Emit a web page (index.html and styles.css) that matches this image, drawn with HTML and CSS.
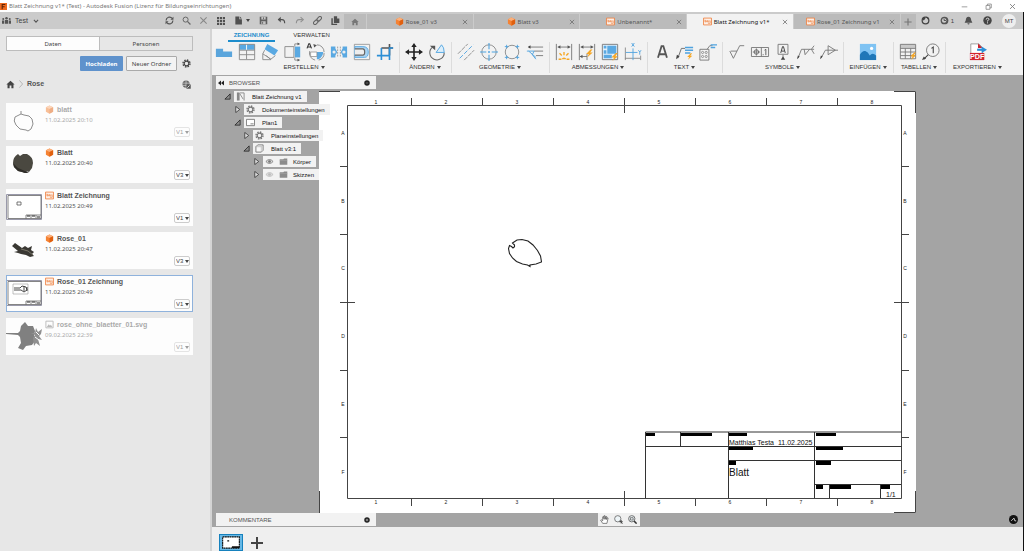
FILE: index.html
```html
<!DOCTYPE html>
<html lang="de">
<head>
<meta charset="utf-8">
<meta name="viewport" content="width=device-width, initial-scale=1">
<title>Blatt Zeichnung v1* (Test) - Autodesk Fusion</title>
<link rel="stylesheet" href="styles.css">
</head>
<body>
<svg class="defs" aria-hidden="true">
  <symbol id="cube" viewBox="0 0 10 10"><path d="M5 .5 9 2.4v5L5 9.6 1 7.4v-5z" fill="#f58233"/><path d="M5 .5 9 2.4 5 4.4 1 2.4z" fill="#fbb07c"/><path d="M5 4.4 9 2.4v5L5 9.6z" fill="#e0600f"/></symbol>
  <symbol id="dwg" viewBox="0 0 10 10"><path d="M.6 1.2h8.800v7.600H.6z" fill="#fdf0e7" stroke="#ee7d3a" stroke-width=".9"/><path d="M2.200 3v2.400h1.600V4.200H2.200M5 3.500v2h1.600v-2M5.500 7H8V4" fill="none" stroke="#ee7d3a" stroke-width=".7"/></symbol>
  <symbol id="pic" viewBox="0 0 10 10"><path d="M1 1.3h8v7.4H1z" fill="none" stroke="#777"/><path d="M2 7.8 4.2 4.6l1.3 1.7 1-.9L8.2 7.8z" fill="#777"/></symbol>
  <symbol id="x" viewBox="0 0 10 10"><path d="m1.5 1.5 7 7m0-7-7 7" fill="none" stroke="currentColor" stroke-width="1.2"/></symbol>
  <symbol id="home" viewBox="0 0 10 10"><path d="M5 .8 9.6 5H8.3v4.2H6V6.2H4v3H1.700V5H.4z" fill="currentColor"/></symbol>
  <symbol id="gear" viewBox="0 0 10 10"><circle cx="5" cy="5" r="3.9" fill="none" stroke="currentColor" stroke-width="1.5" stroke-dasharray="1.7 1.363"/><circle cx="5" cy="5" r="2.6" fill="none" stroke="currentColor" stroke-width="1.3"/></symbol>
  <symbol id="open" viewBox="0 0 8 8"><path d="M7 1v6H1z" fill="#8b8b8b" stroke="#222" stroke-width=".9"/></symbol>
  <symbol id="closed" viewBox="0 0 8 8"><path d="M2 .5 6.500 4 2 7.500z" fill="#ddd" stroke="#333" stroke-width=".9"/></symbol>
  <symbol id="eye" viewBox="0 0 10 10"><path d="M1 5q4-4.400 8 0-4 4.400-8 0z" fill="#ddd" stroke="currentColor" stroke-width=".9"/><circle cx="5" cy="5" r="1.500" fill="currentColor"/></symbol>
  <symbol id="folder" viewBox="0 0 10 10"><path d="M.8 2.600h4l.8-1h3.600v7H.8z" fill="#8c8c8c"/><path d="M.8 4h8.400" stroke="#aaa" stroke-width=".6"/></symbol>
  <symbol id="bolt" viewBox="0 0 8 8"><path d="M5 0 .5 4.600h2.600L1.500 8 7 3.200H4.400L6.800 0z" fill="#f6a623"/></symbol>
  <symbol id="sheet" viewBox="0 0 36 26"><path d="M.5.500h35v25H.5z" fill="#fff" stroke="#99a"/><path d="M2 1.500h33v23H2z" fill="#fff" stroke="#666" stroke-width=".8"/><path d="M20 24.500v-3.500h15M25 21v3m5-3v3" fill="none" stroke="#555" stroke-width=".7"/><path d="M21 22h3m2 0h3m2 1h3" stroke="#222"/></symbol>
</svg>

<header class="titlebar">
  <svg class="i7" viewBox="0 0 8 8"><path d="M0 0h8v8H0z" fill="#ee6a1f"/><path d="M2.500 7V1.800h3.500M2.500 4.300h2.800" fill="none" stroke="#5b2205" stroke-width="1.200"/></svg>
  <span class="titlebar-text">Blatt Zeichnung v1* (Test) - Autodesk Fusion (Lizenz für Bildungseinrichtungen)</span>
  <div class="window-controls">
    <button aria-label="Minimieren"><svg class="i7" viewBox="0 0 10 10"><path d="M1 5.500h8" stroke="#777"/></svg></button>
    <button aria-label="Wiederherstellen"><svg class="i7" viewBox="0 0 10 10"><path d="M1.500 3.500h5.500v5.500H1.500zM3.500 3.500v-2H9v5.500H7" fill="none" stroke="#777"/></svg></button>
    <button aria-label="Schließen"><svg class="i7"><use href="#x"/></svg></button>
  </div>
</header>

<div class="shell">
  <div class="topbar">
    <div class="team">
      <svg class="i9" viewBox="0 0 10 10"><path d="M0 5h2.500v3.500H0zM3.300 4.500h3.400v4H3.300zM7.500 5H10v3.500H7.500z" fill="#555"/><circle cx="1.400" cy="3.300" r="1.100" fill="#555"/><circle cx="5" cy="2.500" r="1.400" fill="#555"/><circle cx="8.600" cy="3.300" r="1.100" fill="#555"/></svg>
      <button class="team-name">Test <svg class="i6" viewBox="0 0 10 10"><path d="m1.500 3 3.500 4 3.500-4" fill="none" stroke="#555" stroke-width="1.700"/></svg></button>
      <div class="team-tools">
        <button aria-label="Aktualisieren"><svg class="i9" viewBox="0 0 10 10"><path d="M1.200 5A3.800 3.800 0 0 1 8 2.700M8.800 5A3.800 3.800 0 0 1 2 7.300" fill="none" stroke="#555" stroke-width="1.300"/><path d="M9.400.8v3.400H6zM.6 9.200V5.800H4z" fill="#555"/></svg></button>
        <button aria-label="Suchen"><svg class="i9" viewBox="0 0 10 10"><circle cx="4" cy="4" r="2.800" fill="none" stroke="#666" stroke-width="1.100"/><path d="m6 6 3.400 3.400" stroke="#666" stroke-width="1.400"/></svg></button>
        <button class="panel-close" aria-label="Panel schließen"><svg class="i9"><use href="#x"/></svg></button>
      </div>
    </div>
    <div class="quick">
      <button aria-label="Datengruppe"><svg class="i8" viewBox="0 0 9 9"><path d="M0 0h2.400v2.400H0zM3.300 0h2.400v2.400H3.300zM6.600 0H9v2.400H6.600zM0 3.300h2.400v2.400H0zM3.300 3.300h2.400v2.400H3.300zM6.600 3.300H9v2.400H6.600zM0 6.600h2.400V9H0zM3.300 6.600h2.400V9H3.300zM6.600 6.600H9V9H6.600z" fill="#505050"/></svg></button>
      <button class="quick-file" aria-label="Datei"><svg class="i9" viewBox="0 0 10 10"><path d="M1.500.5h4.300v3h3v6H1.500zM6.500.5l2.300 2.300H6.500z" fill="#505050"/></svg><span class="caret"></span></button>
      <button aria-label="Speichern"><svg class="i9" viewBox="0 0 10 10"><path d="M.8.800h8.400v8.400H.800z" fill="#606060"/><path d="M2.600 1.200h4.800v2.600H2.600zM2.600 5.800h4.800v3H2.600z" fill="#c4c4c4"/><path d="M5 1.500v2M4 6.500v2.200" stroke="#555" stroke-width=".9"/></svg></button>
      <button aria-label="Rückgängig"><svg class="i9" viewBox="0 0 10 10"><path d="M1.500 4h4q3 0 3 4" fill="none" stroke="#505050" stroke-width="1.300"/><path d="M4.200.8v6.400L.8 4z" fill="#505050"/></svg></button>
      <button aria-label="Wiederherstellen"><svg class="i9" viewBox="0 0 10 10"><path d="M8.500 4h-4q-3 0-3 4" fill="none" stroke="#909090" stroke-width="1.200"/><path d="m6.200 1.200 3 2.800-3 2.800" fill="none" stroke="#909090" stroke-width="1.200"/></svg></button>
      <button aria-label="Verknüpfung"><svg class="i9" viewBox="0 0 10 10"><g fill="none" stroke="#666" stroke-width="1.200" transform="rotate(-45 5 5)"><rect x="-.6" y="3.300" width="6" height="3.400" rx="1.700"/><rect x="4.600" y="3.300" width="6" height="3.400" rx="1.700"/></g></svg></button>
      <button aria-label="Kopien"><svg class="i9" viewBox="0 0 10 10"><path d="M3.200.300h3.600v2.400h2.500v5H3.200z" fill="#505050"/><path d="M1.200 2.500v6.800h5.600" fill="none" stroke="#505050" stroke-width="1.600"/></svg></button>
    </div>
    <nav class="tabs" aria-label="Dokumente">
      <button class="tab-home" aria-label="Start"><svg class="i8"><use href="#home"/></svg></button>
      <div class="tab"><a href="#t1"><svg class="i9"><use href="#cube"/></svg>Rose_01 v3</a><button aria-label="Schließen"><svg class="i6"><use href="#x"/></svg></button></div>
      <div class="tab"><a href="#t2"><svg class="i9"><use href="#cube"/></svg>Blatt v3</a><button aria-label="Schließen"><svg class="i6"><use href="#x"/></svg></button></div>
      <div class="tab"><a href="#t3"><svg class="i9"><use href="#dwg"/></svg>Unbenannt*</a><button aria-label="Schließen"><svg class="i6"><use href="#x"/></svg></button></div>
      <div class="tab tab-active"><a href="#t4"><svg class="i9"><use href="#dwg"/></svg>Blatt Zeichnung v1*</a><button aria-label="Schließen"><svg class="i6"><use href="#x"/></svg></button></div>
      <div class="tab"><a href="#t5"><svg class="i9"><use href="#dwg"/></svg>Rose_01 Zeichnung v1</a><button aria-label="Schließen"><svg class="i6"><use href="#x"/></svg></button></div>
      <button class="tab-add" aria-label="Neues Dokument"><svg class="i8" viewBox="0 0 10 10"><path d="M5 .5v9M.5 5h9" stroke="#777" stroke-width="1.500"/></svg></button>
    </nav>
    <div class="account">
      <button aria-label="Erweiterungen"><svg class="i9" viewBox="0 0 10 10"><circle cx="5" cy="5" r="3.700" fill="none" stroke="#444" stroke-width="1.400"/><path d="M1 3.200 3.500.800l1.500 2L3 5zM6 .5l3 2-1.500 1.500z" fill="#444"/></svg></button>
      <button aria-label="Auftragsstatus"><svg class="i9" viewBox="0 0 10 10"><circle cx="5" cy="5" r="4.300" fill="#555"/><circle cx="4.600" cy="5" r="2.500" fill="#ccc"/><path d="M4.600 3.300V5h2" fill="none" stroke="#444"/></svg><span>1</span></button>
      <button aria-label="Benachrichtigungen"><svg class="i9" viewBox="0 0 10 10"><path d="M5 .8q3 .4 3 4l1.300 2.700H.7L2 4.800q0-3.600 3-4zM3.800 8h2.400q-.2 1.400-1.200 1.400T3.800 8z" fill="#505050"/></svg></button>
      <button aria-label="Hilfe"><svg class="i9" viewBox="0 0 10 10"><circle cx="5" cy="5" r="4.700" fill="#444"/><path d="M3.500 4q0-1.600 1.600-1.600t1.500 1.400Q6.500 4.700 5 5.200v.9M5 7v1.200" fill="none" stroke="#ddd" stroke-width="1.100"/></svg></button>
      <button class="avatar">MT</button>
    </div>
  </div>

  <div class="body">
    <aside class="data">
      <div class="segment"><button class="segment-on">Daten</button><button>Personen</button></div>
      <div class="actions"><button class="primary">Hochladen</button><button class="secondary">Neuer Ordner</button><button class="bare" aria-label="Einstellungen"><svg class="i9"><use href="#gear"/></svg></button></div>
      <nav class="crumbs">
        <a href="#home" aria-label="Start"><svg class="i9"><use href="#home"/></svg></a>
        <svg class="i8" viewBox="0 0 10 10"><path d="m3 .5 4 4.500-4 4.500" fill="none" stroke="#aaa"/></svg>
        <a class="crumb" href="#rose">Rose</a>
        <button class="bare" aria-label="Im Web öffnen"><svg class="i9" viewBox="0 0 10 10"><circle cx="4.500" cy="4.500" r="4" fill="#666"/><path d="M.5 3.500h8M.5 6h8M4.500.5v8" stroke="#ddd" stroke-width=".7"/><path d="M5 5h4.700v4.700H5z" fill="#555"/><path d="m6 8.500 2.500-2.500" stroke="#eee"/></svg></button>
      </nav>
      <ul class="files">
        <li class="file file-dim">
          <svg class="thumb" viewBox="0 0 36 36"><path d="M15 11 13 12 9 14Q7 18 10 22L14 26 20 27 22 28 25 26 27 21Q27 15 23 13L18 12 15 11V8" fill="none" stroke="#222"/></svg>
          <div class="info"><h3><svg class="i9"><use href="#cube"/></svg>blatt</h3><time>11.02.2025 20:10</time></div>
          <label class="version"><select aria-label="Version blatt"><option>V1</option></select></label>
        </li>
        <li class="file">
          <svg class="thumb" viewBox="0 0 36 36"><path d="M7 17q0-6 5-9l2 2 3-2h4q6 3 6 9l-1 5-3 4-2-1-2 2-3-1-4-1-4-4z" fill="#4a4840"/><path d="m7 17 5 5 7 3 4 1-2 1-2 0-3-1-4-1-4-4z" fill="#2f2d28"/></svg>
          <div class="info"><h3><svg class="i9"><use href="#cube"/></svg>Blatt</h3><time>11.02.2025 20:40</time></div>
          <label class="version"><select aria-label="Version Blatt"><option>V3</option></select></label>
        </li>
        <li class="file">
          <svg class="thumb" viewBox="0 0 36 36"><use href="#sheet" y="5" width="36" height="26"/><path d="M11 13h4v3h-4z" fill="#fff" stroke="#555" stroke-width=".8"/></svg>
          <div class="info"><h3><svg class="i9"><use href="#dwg"/></svg>Blatt Zeichnung</h3><time>11.02.2025 20:49</time></div>
          <label class="version"><select aria-label="Version Blatt Zeichnung"><option>V1</option></select></label>
        </li>
        <li class="file">
          <svg class="thumb" viewBox="0 0 36 36"><path d="m9 11 7 5 3-2 3 2 4-2-1 4 3 2-2 2 2 2-4 1-4-2-5-1-3-1-4-1 4-1-6-5z" fill="#3a3833"/><path d="m15 17 7 2 5 4" stroke="#777466" fill="none"/></svg>
          <div class="info"><h3><svg class="i9"><use href="#cube"/></svg>Rose_01</h3><time>11.02.2025 20:47</time></div>
          <label class="version"><select aria-label="Version Rose_01"><option>V3</option></select></label>
        </li>
        <li class="file file-on">
          <svg class="thumb" viewBox="0 0 36 36"><use href="#sheet" y="5" width="36" height="26"/><path d="M7 9h15v10H7z" fill="none" stroke="#999" stroke-width=".6"/><path d="M8 13h6l2-2 4 1 1 3-3 2-3-2H8M18 11v5m3-4v4" fill="none" stroke="#333" stroke-width=".9"/></svg>
          <div class="info"><h3><svg class="i9"><use href="#dwg"/></svg>Rose_01 Zeichnung</h3><time>11.02.2025 20:49</time></div>
          <label class="version"><select aria-label="Version Rose_01 Zeichnung"><option>V1</option></select></label>
        </li>
        <li class="file file-faded">
          <svg class="thumb" viewBox="0 0 36 36"><path d="M0 15h12l2-2 1-5 4-4 3 4h5l2 5-1 5 1 5-3 4-6 1-3 4-5-2 3-5-1-6-2-2-12-1z" fill="#808080"/><path d="m29 15 1-5 2 4 4-3-1 5-2 2 3 4-4-1 2 7-4-3-2 3-1-8 2-3-4-2z" fill="#909090"/><path d="m30 14 3 3m-4 2 4 3" stroke="#fff"/></svg>
          <div class="info"><h3><svg class="i9"><use href="#pic"/></svg>rose_ohne_blaetter_01.svg</h3><time>09.02.2025 22:39</time></div>
          <label class="version"><select aria-label="Version rose_ohne_blaetter_01.svg"><option>V1</option></select></label>
        </li>
      </ul>
    </aside>

    <main class="work">
      <div class="ribbon">
        <nav class="ribbon-tabs"><button class="ribbon-on">ZEICHNUNG</button><button>VERWALTEN</button></nav>
        <div class="groups">
          <section class="group group-first">
            <div class="tools">
              <button aria-label="Basisansicht"><svg viewBox="0 0 20 20"><path d="M1 6.500h8v3h10v6H1z" fill="#5aa5dc"/></svg></button>
              <button aria-label="Parallelansicht"><svg viewBox="0 0 20 20"><path d="M1.500 1.500h17v6h-17z" fill="#5aa9e2"/><path d="M1.500 1.500h17v17h-17zM1.500 8h17M1.500 13h17M9.500 8v10" fill="none" stroke="#888"/><path d="M9.500 2v5.500" stroke="#fff"/></svg></button>
              <button aria-label="Schnittansicht"><svg viewBox="0 0 20 20"><path d="m7 1 12 7-4 6L4 7z" fill="#5aa9e2"/><path d="m4 8-2 4 9 6 5-4M2 12v6.500h9L6 14" fill="none" stroke="#888"/></svg></button>
              <button aria-label="Detailansicht"><svg viewBox="0 0 20 20"><path d="M12 4h6v12h-6z" fill="#5aa9e2"/><path d="M1 4h10v12H1zM12 4V1h4M12 16v3h4" fill="none" stroke="#888"/><path d="m15-.5 3 1.500-3 1.500zM15 17.500l3 1.500-3 1.500z" fill="#555"/></svg></button>
              <button aria-label="Hilfsansicht"><svg viewBox="0 0 20 20"><path d="m0 6 2-5h1l2 5M1 4.500h3" fill="none" stroke="#333" stroke-width="1.200"/><path d="M11 2a8 8 0 0 1 8 8M3 9a8 8 0 0 0 6 10M19 11a8 8 0 0 1-6 8" fill="none" stroke="#888"/><path d="M11 10h7q0 5-5 8h-2z" fill="#5aa9e2"/><path d="M4 10h7v5H4z" fill="#fff" stroke="#888" stroke-width=".8"/><path d="m7 1 4 1.500L8 5z" fill="#555"/></svg></button>
              <button aria-label="Unterbrochene Ansicht"><svg viewBox="0 0 20 20"><path d="M1 4h5v2l2 4-2 4v2H1zM19 4h-5v2l-2 4 2 4v2h5z" fill="#5aa9e2"/><path d="M8.500 4v12M11.500 4v12" stroke="#999" stroke-dasharray="2 1"/><circle cx="4.500" cy="10" r="1.800" fill="#eee"/><circle cx="15.500" cy="10" r="1.800" fill="#eee"/></svg></button>
              <button aria-label="Ausschnitt"><svg viewBox="0 0 20 20"><path d="M1.500 1.500h17v17h-17z" fill="none" stroke="#999"/><path d="M2 4h9q6 0 6 6t-4 6H2z" fill="#a9d3f2" stroke="#5aa9e2"/><path d="M2 6.500h9q2 0 2 3.500t-2 3.500H2" fill="#eee" stroke="#666" stroke-width="1.300"/></svg></button>
              <button aria-label="Zuschneiden"><svg viewBox="0 0 20 20"><path d="M6 5.500h13M15 1v13" stroke="#555" stroke-width="1.800"/><path d="M1 14h14v5M6 19V5.500M19 5.500h-4V14" fill="none" stroke="#2c8fd6" stroke-width="1.800"/></svg></button>
            </div>
            <button class="group-name">ERSTELLEN<span class="caret"></span></button>
          </section>
          <section class="group">
            <div class="tools">
              <button aria-label="Verschieben"><svg viewBox="0 0 20 20"><path d="M10 4v12M4 10h12" stroke="#222" stroke-width="1.800"/><path d="m10 0 3 4.500H7zM10 20l3-4.500H7zM0 10l4.500-3v6zM20 10l-4.500-3v6z" fill="#222"/></svg></button>
              <button aria-label="Drehen"><svg viewBox="0 0 20 20"><path d="M5 4.500a8 8 0 1 0 13 6" fill="none" stroke="#666" stroke-width="1.200"/><path d="M2 3h6v5z" fill="#555"/><path d="M9 10.500h9q0-6-3-8.500z" fill="#dceefa" stroke="#4fa3df"/></svg></button>
            </div>
            <button class="group-name">ÄNDERN<span class="caret"></span></button>
          </section>
          <section class="group">
            <div class="tools">
              <button aria-label="Mittellinie"><svg viewBox="0 0 20 20"><path d="M1 12 12 1M8 19 19 8" stroke="#888" stroke-dasharray="5 1"/><path d="m3 17 15-15" stroke="#4fa3df" stroke-dasharray="5 2"/></svg></button>
              <button aria-label="Mittelpunktmarkierung"><svg viewBox="0 0 20 20"><circle cx="10" cy="10" r="8" fill="none" stroke="#888"/><path d="M10 0v7m0 2v2m0 2v7M0 10h7m2 0h2m2 0h7" stroke="#4fa3df" stroke-width="1.200"/></svg></button>
              <button aria-label="Mittelpunktmuster"><svg viewBox="0 0 20 20"><circle cx="10" cy="10" r="7.500" fill="none" stroke="#888"/><path d="M4 2v4m-2-2h4M16 2v4m-2-2h4M4 14v4m-2-2h4M16 14v4m-2-2h4" stroke="#4fa3df"/></svg></button>
              <button aria-label="Kantenverlängerung"><svg viewBox="0 0 20 20"><path d="M3 4.500h16M9 9h10M11 14h8" stroke="#777"/><path d="M5 2.500 2 4.500l3 2z" fill="#444"/><path d="m1 9 8 0-2 4 4 5M3 9l8 7" fill="none" stroke="#4fa3df"/></svg></button>
            </div>
            <button class="group-name">GEOMETRIE<span class="caret"></span></button>
          </section>
          <section class="group">
            <div class="tools">
              <button aria-label="Bemaßung"><svg viewBox="0 0 20 20"><path d="M1.500 1v18M18.500 1v18M3 4.500h14" stroke="#777"/><path d="m6 2.500-3 2 3 2zM14 2.500l3 2-3 2z" fill="#555"/><path d="M10 10v3.500M5 11.500l2.500 2.500M15 11.500 12.500 14M4 18h3M13 18h3" fill="none" stroke="#f6a623" stroke-width="1.500"/><path d="M7 18q3-4 6 0" fill="#f6a623"/></svg></button>
              <button aria-label="Kettenbemaßung"><svg viewBox="0 0 20 20"><path d="M1.500 1v18M18.500 1v18M3 4.500h14M2 15h8M10 12v7" stroke="#777"/><path d="m6 2.500-3 2 3 2zM14 2.500l3 2-3 2zM5 13l-3 2 3 2z" fill="#555"/><use href="#bolt" x="8" y="7" width="10" height="9"/></svg></button>
              <button aria-label="Automatische Bemaßung"><svg viewBox="0 0 20 20"><path d="M1.500 1.500h17v17h-17z" fill="#e4f1fb" stroke="#777"/><path d="M3 3h3v3H3zM7 3h10v9H7zM3 8h3v4H3zM3 13h9v4H3z" fill="#5aa9e2"/><use href="#bolt" x="11" y="11" width="9" height="9"/></svg></button>
              <button aria-label="Koordinatenbemaßung"><svg viewBox="0 0 20 20"><path d="M1.500 5v14M1 17h17M18.500 14v5" stroke="#888"/><path d="M10 6v13M2 10.500h13M8.500 0l3 4m0-4-3 4M16 8l1.500 2L19 8m-1.500 2v3" fill="none" stroke="#4fa3df"/></svg></button>
            </div>
            <button class="group-name">ABMESSUNGEN<span class="caret"></span></button>
          </section>
          <section class="group">
            <div class="tools">
              <button aria-label="Text"><svg viewBox="0 0 20 20"><path d="m5.500 16.500 4-13h2l4 13M7 12.500h7" fill="none" stroke="#555" stroke-width="2"/></svg></button>
              <button aria-label="Führungslinie"><svg viewBox="0 0 20 20"><path d="M2 17 6 6h4" fill="none" stroke="#666"/><path d="m0 18 1-5 3 2z" fill="#444"/><path d="M10 5h9M10 8h9M10 11h6" stroke="#4fa3df" stroke-width="1.700"/><use href="#bolt" x="12" y="11" width="7" height="8"/></svg></button>
              <button aria-label="Bohrungsinfo"><svg viewBox="0 0 20 20"><path d="M1 7h10v12H1zM9 7l3-4h3" fill="none" stroke="#777"/><g fill="none" stroke="#777" stroke-width=".8"><circle cx="4" cy="10.500" r="1.200"/><circle cx="8" cy="10.500" r="1.200"/><circle cx="4" cy="15" r="1.200"/><circle cx="8" cy="15" r="1.200"/></g><path d="M13 2h7M13 5h5" stroke="#4fa3df" stroke-width="1.400"/></svg></button>
            </div>
            <button class="group-name">TEXT<span class="caret"></span></button>
          </section>
          <section class="group">
            <div class="tools">
              <button aria-label="Oberfläche"><svg viewBox="0 0 20 20"><path d="m2 9 4 8 7-14h5M3 9h7" fill="none" stroke="#777"/></svg></button>
              <button aria-label="Geometrische Toleranz"><svg viewBox="0 0 20 20"><path d="M.5 5h19v10H.5zM11.500 5v10M2 10h8M6 6v8" fill="none" stroke="#777"/><circle cx="6" cy="10" r="2.500" fill="none" stroke="#666"/><path d="M13 13h1M15 8l1.500-1v6.500" fill="none" stroke="#555"/></svg></button>
              <button aria-label="Bezug"><svg viewBox="0 0 20 20"><path d="M4.500 1.500h11v11h-11zM10 13v5" fill="none" stroke="#777"/><path d="m7.500 11 2-7h1l2 7M8.500 9h3" fill="none" stroke="#444" stroke-width="1.100"/><path d="M7.500 18.500h5L10 15z" fill="#444"/></svg></button>
              <button aria-label="Schweißen"><svg viewBox="0 0 20 20"><path d="m1 17 4-10h14M19 3l-3 4 3 5M8 7l1 6 5-6" fill="none" stroke="#777"/><path d="m0 18 1-4 2 1z" fill="#444"/></svg></button>
              <button aria-label="Kegel"><svg viewBox="0 0 20 20"><path d="m1 17 5-9h3m0-5v10l8-5zM9 8h11" fill="none" stroke="#777"/><path d="m0 18 1-4 2 1z" fill="#444"/></svg></button>
            </div>
            <button class="group-name">SYMBOLE<span class="caret"></span></button>
          </section>
          <section class="group group-wide">
            <div class="tools">
              <button aria-label="Bild einfügen"><svg viewBox="0 0 20 20"><path d="M1 1h18v18H1z" fill="#7fc3f3"/><path d="M1 13q3-5 6-4t5 5q3-4 7 0v5H1z" fill="#1f77b8"/><circle cx="14" cy="6" r="1.800" fill="#fff"/></svg></button>
            </div>
            <button class="group-name">EINFÜGEN<span class="caret"></span></button>
          </section>
          <section class="group">
            <div class="tools">
              <button aria-label="Tabelle"><svg viewBox="0 0 20 20"><path d="M1.500 1.500h17v4h-17z" fill="#c9c9c9"/><path d="M1.500 1.500h17v16h-17zM1.500 6h17M1.500 10h17M1.500 14h17M7 6v11.500M13 6v11.500" fill="none" stroke="#777"/><use href="#bolt" x="12" y="10" width="8" height="9"/></svg></button>
              <button aria-label="Positionsnummer"><svg viewBox="0 0 20 20"><circle cx="12" cy="8" r="7" fill="none" stroke="#777"/><path d="m7 13-5 5M10.500 6l2-1.500v7" fill="none" stroke="#444" stroke-width="1.200"/><path d="m0 19 2-4 2.500 2.500z" fill="#444"/></svg></button>
            </div>
            <button class="group-name">TABELLEN<span class="caret"></span></button>
          </section>
          <section class="group group-last">
            <div class="tools">
              <button aria-label="PDF exportieren"><svg viewBox="0 0 20 20"><path d="M2 1h9l4 4v7H2z" fill="#fff" stroke="#999"/><path d="m10 .5 5 5h-5z" fill="#c8202c"/><path d="M1 11h16v8H1z" fill="#d2232f"/><text class="pdf" x="9" y="18">PDF</text><path d="M9 7.500h6" stroke="#2b8fd8" stroke-width="2.400"/><path d="m14 4 6 3.500L14 11z" fill="#2b8fd8"/></svg></button>
            </div>
            <button class="group-name">EXPORTIEREN<span class="caret"></span></button>
          </section>
        </div>
      </div>

      <div class="canvas">
        <svg class="drawing" viewBox="319 91 597 422" role="img" aria-label="Zeichnungsblatt">
          <path d="M319 91h597v422H319z" fill="#fff"/>
          <g fill="none" stroke="#444">
            <path d="M319 91.500h21M894 91.500h21.500V113M915.500 491v21.500H894M319.500 491v22"/>
            <path d="M347.500 105.500h554v393h-554z"/>
            <path d="M411.500 98v7M482.500 98v7M553.500 98v7M624.500 98v15M695.500 98v7M766.500 98v7M837.500 98v7M411.500 499v7M482.500 499v7M553.500 499v7M624.500 491v15M695.500 499v7M766.500 499v7M837.500 499v7"/>
            <path d="M340 166.500h7M340 234.500h7M340 302.500h15M340 370.500h7M340 437.500h7M902 166.500h7M902 234.500h7M894 302.500h15M902 370.500h7M902 437.500h7"/>
            <path d="M645.500 498v-66h256M645.500 446.500h256M680.500 432v14M728.500 432v66M814.500 432v66M728 460.500h173M815 484.500h86M829.500 485v13M880.500 485v13" stroke="#333"/>
          </g>
          <path d="M646 433h9v3h-9zM681 433h31v3h-31zM729 433h18v3h-18zM816 433h20v3h-20zM729 447h24v3h-24zM816 447h27v3h-27zM729 461h7v4h-7zM816 461h15v4h-15zM816 485h7v4h-7zM830 485h21v4h-21zM881 485h9v4h-9z" fill="#000"/>
          <path d="M512.500 243 517 240 522 239.500 528 241 533 245 537.500 250.500 540.500 256 541.500 262 536 264 530 265V266.500L527.500 265 522.500 264 516.500 261.500 512.500 258 509.500 253.500 508.500 248.500 509.500 245.500 511.500 246.500 513 248 514.500 246.800V245z" fill="none" stroke="#222" stroke-width="1.100"/>
          <g class="zones">
            <text x="376" y="104">1</text><text x="446" y="104">2</text><text x="517" y="104">3</text><text x="588" y="104">4</text><text x="659" y="104">5</text><text x="730" y="104">6</text><text x="801" y="104">7</text><text x="872" y="104">8</text>
            <text x="376" y="504">1</text><text x="446" y="504">2</text><text x="517" y="504">3</text><text x="588" y="504">4</text><text x="659" y="504">5</text><text x="730" y="504">6</text><text x="801" y="504">7</text><text x="872" y="504">8</text>
            <text x="343" y="135">A</text><text x="343" y="203">B</text><text x="343" y="270">C</text><text x="343" y="338">D</text><text x="343" y="406">E</text><text x="343" y="474">F</text>
            <text x="905" y="135">A</text><text x="905" y="203">B</text><text x="905" y="270">C</text><text x="905" y="338">D</text><text x="905" y="406">E</text><text x="905" y="474">F</text>
          </g>
          <text class="block-text" x="729" y="445">Matthias Testa</text><text class="block-text" x="778" y="445">11.02.2025</text>
          <text class="block-title" x="729" y="476">Blatt</text>
          <text class="block-text" x="886" y="497">1/1</text>
        </svg>

        <section class="browser">
          <h2 class="bar"><svg class="i6" viewBox="0 0 10 10"><path d="M5 1v8L0 5zM10 1v8L5 5z" fill="#222"/></svg><span>BROWSER</span><button aria-label="Optionen"><svg class="i6" viewBox="0 0 10 10"><circle cx="5" cy="5" r="4.600" fill="#222"/><path d="M3 5h4" stroke="#999"/></svg></button></h2>
          <ul class="tree">
            <li class="level-1"><svg class="i7"><use href="#open"/></svg><span class="node"><svg class="i9" viewBox="0 0 10 10"><path d="M1 .5h3v9H1z" fill="#888"/><path d="M4.500 1H9v8.500M4 1.500 8 8" fill="none" stroke="#888"/></svg>Blatt Zeichnung v1</span></li>
            <li class="level-2"><svg class="i7"><use href="#closed"/></svg><span class="node"><svg class="i9"><use href="#gear"/></svg>Dokumenteinstellungen</span></li>
            <li class="level-2"><svg class="i7"><use href="#open"/></svg><span class="node"><svg class="i9" viewBox="0 0 10 10"><path d="M.5 1.500h9v7h-9z" fill="#fff" stroke="#777"/><path d="M5 6.500h3.500" stroke="#777"/></svg>Plan1</span></li>
            <li class="level-3"><svg class="i7"><use href="#closed"/></svg><span class="node"><svg class="i9"><use href="#gear"/></svg>Planeinstellungen</span></li>
            <li class="level-3"><svg class="i7"><use href="#open"/></svg><span class="node"><svg class="i9" viewBox="0 0 10 10"><path d="M1 3 3 1h6v6L7 9H1z" fill="#f8f8f8" stroke="#777"/><path d="M1 3h6v6M7 3l2-2" fill="none" stroke="#aaa" stroke-width=".7"/></svg>Blatt v3:1</span></li>
            <li class="level-4"><svg class="i7"><use href="#closed"/></svg><span class="node"><svg class="i9 eye-on"><use href="#eye"/></svg><svg class="i9"><use href="#folder"/></svg>Körper</span></li>
            <li class="level-4"><svg class="i7"><use href="#closed"/></svg><span class="node"><svg class="i9 eye-off"><use href="#eye"/></svg><svg class="i9"><use href="#folder"/></svg>Skizzen</span></li>
          </ul>
        </section>

        <section class="comments"><h2 class="bar"><svg class="i6"></svg><span>KOMMENTARE</span><button aria-label="Kommentar hinzufügen"><svg class="i6" viewBox="0 0 10 10"><circle cx="5" cy="5" r="4.600" fill="#222"/><path d="M5 3v4M3 5h4" stroke="#ddd"/></svg></button></h2></section>
        <div class="navbar">
          <button aria-label="Pan"><svg class="i9" viewBox="0 0 10 10"><path d="M3 9.300 .7 5.800l1-.4L3 6.500V2l1-.3.5 3V.800h1l.3 4 .6-3.300 1 .2-.2 3.300.9-2 .9.300L7.700 9.300z" fill="#fff" stroke="#444" stroke-width=".7"/></svg></button>
          <button aria-label="Zoom"><svg class="i9" viewBox="0 0 10 10"><circle cx="4.200" cy="4.200" r="3.500" fill="#eef5f8" stroke="#666" stroke-width=".9"/><path d="m6.500 6.500 3 3M8 5.500v4M6 7.500h3.800" stroke="#444"/></svg></button>
          <button aria-label="Zoomfenster"><svg class="i9" viewBox="0 0 10 10"><circle cx="4.200" cy="4.200" r="3.500" fill="#eef5f8" stroke="#555" stroke-width=".9"/><path d="M2.700 3h3v2.600h-3z" fill="none" stroke="#555" stroke-width=".8"/><path d="m6.800 6.800 2.800 2.800" stroke="#333" stroke-width="1.600"/></svg></button>
        </div>
        <button class="assist" aria-label="Assistent"><svg class="i9" viewBox="0 0 10 10"><circle cx="5" cy="5" r="5" fill="#111"/><path d="m2.500 6.500 3-3 1 3h1.500" fill="none" stroke="#ddd"/></svg></button>
      </div>

      <footer class="sheets">
        <button class="sheet-thumb" aria-label="Plan1"><svg viewBox="0 0 20 14"><path d="M1 1h18v12H1z" fill="#fff" stroke="#111" stroke-width="1.200" stroke-dasharray="2 .5"/><path d="M6 4.500h2v1.500H6zM11 11h8v2h-8z" fill="#111"/></svg></button>
        <button aria-label="Plan hinzufügen"><svg class="plus" viewBox="0 0 12 12"><path d="M6 0v12M0 6h12" stroke="#444" stroke-width="2"/></svg></button>
      </footer>
    </main>
  </div>
</div>
</body>
</html>
```
FILE: styles.css
```css
* { box-sizing: border-box; }

body {
  margin: 0;
  height: 100vh;
  display: flex;
  flex-direction: column;
  overflow: hidden;
  background: #fff;
  color: #444;
  font: 6px/8px "Liberation Sans", Arial, sans-serif;
}

button, select {
  margin: 0;
  padding: 0;
  border: 0;
  background: none;
  color: inherit;
  font: inherit;
}

a { color: inherit; text-decoration: none; }
ul { margin: 0; padding: 0; list-style: none; }
h2, h3 { margin: 0; font: inherit; }
svg { display: block; flex: none; }

.defs { position: absolute; width: 0; height: 0; }
.i6 { width: 6px; height: 6px; }
.i7 { width: 7px; height: 7px; }
.i8 { width: 8px; height: 8px; }
.i9 { width: 9px; height: 9px; }

.caret {
  border: 2px solid transparent;
  border-top: 3px solid #444;
  border-bottom: 0;
}

/* Window title */
.titlebar {
  display: flex;
  align-items: center;
  gap: 2px;
  height: 12px;
  color: #777;
}
.titlebar, .tabs, .segment, .actions, .info time {
  font-family: "Noto Sans", "Open Sans", sans-serif;
}
.window-controls { display: flex; margin-left: auto; color: #777; }
.window-controls button { width: 24px; display: grid; place-items: center; }

.shell {
  flex: 1;
  min-height: 0;
  display: flex;
  flex-direction: column;
  border-right: 1px solid #111;
}

/* Top bar */
.topbar {
  display: flex;
  align-items: stretch;
  height: 17px;
  background: #cbcbcb;
}
.topbar button { display: flex; align-items: center; justify-content: center; }
.team {
  width: 212px;
  display: flex;
  align-items: center;
  gap: 4px;
  padding-left: 2px;
}
.team .team-name { gap: 5px; font-size: 7px; }
.team-tools { display: flex; margin-left: auto; }
.team-tools button { width: 17px; }
.panel-close { color: #888; }
.quick { width: 132px; display: flex; }
.quick button { flex: 1; }
.quick .quick-file { flex: 1.400; gap: 3px; }
.tabs {
  flex: 1;
  min-width: 0;
  display: flex;
  gap: 1px;
  padding-top: 2px;
  color: #555;
}
.tab, .tab-home, .tab-add { background: #bbb; }
.tabs .tab-home { width: 22px; color: #777; }
.tabs .tab-add { width: 15px; }
.tab { flex: 1; min-width: 0; display: flex; align-items: center; }
.tab a {
  flex: 1;
  display: flex;
  align-items: center;
  justify-content: center;
  gap: 2px;
  padding-left: 7px;
  white-space: nowrap;
}
.tab button { width: 15px; color: #666; }
.tab-active { background: #f2f2f2; color: #111; }
.account { display: flex; align-items: center; gap: 10px; padding: 0 7px 0 5px; }
.account button { gap: 2px; }
.account .avatar {
  width: 14px;
  height: 14px;
  border-radius: 50%;
  background: #eee;
}

.body { flex: 1; min-height: 0; display: flex; }

/* Data panel */
.data {
  width: 212px;
  padding: 7px 17px 0 6px;
  border-right: 2px solid #d4d4d4;
  background: #e7e7e7;
}
.segment { display: flex; height: 15px; border: 1px solid #bdbdbd; }
.segment button { flex: 1; }
.segment .segment-on { background: #fdfdfd; border-right: 1px solid #bdbdbd; }
.actions { display: flex; justify-content: flex-end; gap: 3px; margin-top: 5px; height: 15px; }
.primary { width: 43px; border-radius: 1px; background: #5f92cc; color: #fff; font-weight: bold; }
.secondary { width: 51px; border: 1px solid #aaa; border-radius: 1px; background: #f3f3f3; }
.bare { width: 13px; display: grid; place-items: center; }
.crumbs { display: flex; align-items: center; gap: 2px; height: 10px; margin-top: 8px; }
.crumb { font-size: 7px; font-weight: bold; color: #555; }
.crumbs .bare { margin-left: auto; }
.files { display: grid; gap: 6px; margin-top: 14px; }
.file {
  position: relative;
  display: flex;
  height: 37px;
  background: #fdfdfd;
}
.file-on { outline: 1px solid #8fb2dc; outline-offset: -1px; }
.file-dim > *, .file-faded > .info, .file-faded > .version { opacity: 0.5; }
.thumb { width: 36px; height: 36px; }
.info { padding: 2px 0 0 3px; color: #555; }
.info h3 {
  display: flex;
  align-items: center;
  gap: 3px;
  font-size: 7px;
  line-height: 9px;
  font-weight: bold;
  color: #555;
}
.info time { display: block; margin-top: 2px; }
.version {
  position: absolute;
  right: 3px;
  bottom: 3px;
  display: flex;
  align-items: center;
  width: 16px;
  height: 10px;
  border: 1px solid #ccc;
  border-radius: 2px;
}
.version select { width: 100%; padding-left: 1px; appearance: none; line-height: 8px; }
.version::after {
  content: "";
  position: absolute;
  right: 0;
  border: 2px solid transparent;
  border-top: 3px solid #444;
  border-bottom: 0;
}

/* Ribbon */
.work { flex: 1; min-width: 0; display: flex; flex-direction: column; }
.ribbon { height: 46px; background: #f2f2f2; color: #333; }
.ribbon-tabs { display: flex; gap: 13px; padding-left: 16px; }
.ribbon-tabs button { width: 47px; height: 13px; border-bottom: 2px solid transparent; white-space: nowrap; }
.ribbon-tabs .ribbon-on { border-color: #1c8ccc; color: #1c8ccc; font-weight: bold; }
.groups { display: flex; height: 31px; }
.group {
  display: flex;
  flex-direction: column;
  align-items: center;
  padding: 0 3px 0 2px;
  border-right: 1px solid #dcdcdc;
}
.group-first { padding: 0 3px 0 0; }
.group-wide { width: 50px; }
.group-last { flex: 1; max-width: 64px; border: 0; }
.tools { display: flex; height: 20px; }
.tools button { width: 23px; display: grid; place-items: center; }
.tools svg { width: 18px; height: 18px; overflow: visible; }
.pdf { font-size: 8px; font-weight: bold; fill: #fff; text-anchor: middle; }
.group-name { display: flex; align-items: center; gap: 2px; height: 10px; white-space: nowrap; }

/* Drawing area */
.canvas {
  position: relative;
  flex: 1;
  min-height: 0;
  padding: 16px 107px 14px;
  background: #a4a4a4;
}
.drawing { width: 100%; height: 100%; }
.zones { font-size: 5px; text-anchor: middle; fill: #222; }
.block-text { font-size: 7px; fill: #111; }
.block-title { font-size: 10px; fill: #111; }

.browser, .comments { position: absolute; left: 4px; width: 160px; }
.browser { top: 1px; }
.comments { bottom: 1px; }
.bar {
  display: flex;
  align-items: center;
  gap: 5px;
  height: 13px;
  padding: 0 6px 0 2px;
  background: #f2f2f2;
  color: #555;
}
.bar button { margin-left: auto; }
.tree { display: grid; gap: 2px; margin-top: 2px; color: #111; }
.tree li { display: flex; align-items: center; gap: 3px; height: 11px; }
.level-1 { padding-left: 8px; }
.level-2 { padding-left: 18px; }
.level-3 { padding-left: 27px; }
.level-4 { padding-left: 37px; }
.node {
  display: flex;
  align-items: center;
  gap: 7px;
  height: 11px;
  padding: 0 5px 0 2px;
  background: #f2f2f2;
  white-space: nowrap;
}
.node svg { color: #777; }
.level-4 .node { gap: 5px; }
.node .eye-off { color: #bbb; }

.navbar {
  position: absolute;
  left: 50%;
  bottom: 1px;
  display: flex;
  align-items: center;
  width: 42px;
  height: 13px;
  margin-left: -20px;
  background: #f0f0f0;
}
.navbar button { flex: 1; display: grid; place-items: center; }
.assist { position: absolute; right: 5px; bottom: 3px; }

/* Sheet strip */
.sheets {
  display: flex;
  gap: 8px;
  height: 24px;
  padding: 7px 7px 0;
  background: #efefef;
}
.sheet-thumb { padding: 1px; border: 1px solid #1681bd; background: #66b8e6; }
.sheet-thumb svg { width: 20px; height: 13px; }
.plus { width: 12px; height: 12px; }
```
